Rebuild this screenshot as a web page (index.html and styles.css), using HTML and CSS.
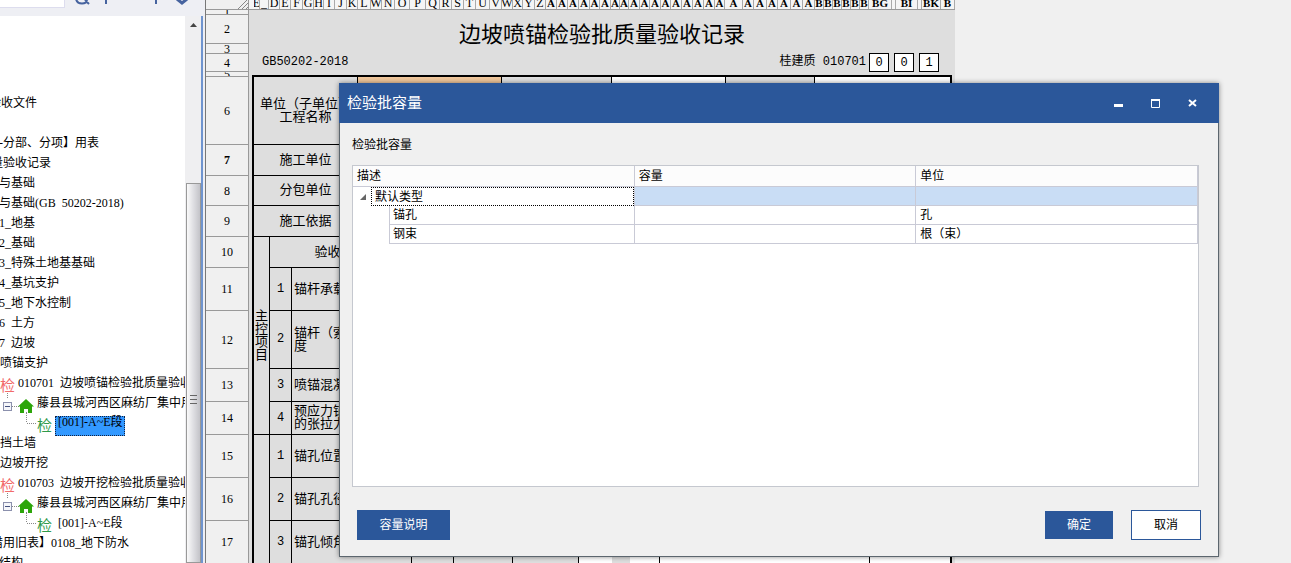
FILE: index.html
```html
<!DOCTYPE html>
<html lang="zh-CN">
<head>
<meta charset="utf-8">
<title>检验批容量</title>
<link rel="stylesheet" href="styles.css">
</head>
<body>
<div class="app">
  <aside class="sidebar">
    <div class="toolbar">
      <input class="search" type="text" aria-label="搜索">
      <svg class="tools" width="125" height="8" viewBox="0 0 125 8" fill="none" stroke="#46639f" stroke-width="2">
        <path d="M11 -1q1 4.500 6 4.500t5-4.500M20 0l4 4"/><path d="M41 0v4"/><path d="M91 0v4"/><path d="M112 -1l5 4 5-4" stroke-width="3"/>
      </svg>
    </div>
    <div class="side-body">
      <ul class="tree">
        <li class="row in-a">验收文件</li>
        <li class="row"></li>
        <li class="row in-c">-分部、分项】用表</li>
        <li class="row in-b">量验收记录</li>
        <li class="row in-c">与基础</li>
        <li class="row in-c">与基础(GB&nbsp; 50202-2018)</li>
        <li class="row in-c">1_地基</li>
        <li class="row in-c">2_基础</li>
        <li class="row in-c">3_特殊土地基基础</li>
        <li class="row in-c">4_基坑支护</li>
        <li class="row in-c">5_地下水控制</li>
        <li class="row in-c">6&nbsp; 土方</li>
        <li class="row in-c">7&nbsp; 边坡</li>
        <li class="row in-d">喷锚支护</li>
        <li class="row in-d"><span class="mark red">检</span>010701&nbsp; 边坡喷锚检验批质量验收记录</li>
        <li class="row in-d"><svg class="node" width="37" height="20" viewBox="0 0 37 20"><path d="M7.500 0v6M12 13.500h7M26.500 19v1" stroke="#888" stroke-dasharray="1 1" fill="none"/><rect x="3.500" y="9.500" width="8" height="8" fill="#f4f5fa" stroke="#8b90ad"/><path d="M5 13.500h5" stroke="#44507e"/><path d="M26 6l8 7.500h-2V20h-4v-4h-4v4h-4v-6.500h-2z" fill="#2ca50a"/></svg>藤县县城河西区麻纺厂集中用地</li>
        <li class="row in-d"><svg class="node" width="37" height="20" viewBox="0 0 37 20"><path d="M26.500 0v10M27 10.500h10" stroke="#888" stroke-dasharray="1 1" fill="none"/></svg><span class="mark green">检</span><span class="leaf selected">[001]-A~E段</span></li>
        <li class="row in-d">挡土墙</li>
        <li class="row in-d">边坡开挖</li>
        <li class="row in-d"><span class="mark red">检</span>010703&nbsp; 边坡开挖检验批质量验收记录</li>
        <li class="row in-d"><svg class="node" width="37" height="20" viewBox="0 0 37 20"><path d="M7.500 0v6M12 13.500h7M26.500 19v1" stroke="#888" stroke-dasharray="1 1" fill="none"/><rect x="3.500" y="9.500" width="8" height="8" fill="#f4f5fa" stroke="#8b90ad"/><path d="M5 13.500h5" stroke="#44507e"/><path d="M26 6l8 7.500h-2V20h-4v-4h-4v4h-4v-6.500h-2z" fill="#2ca50a"/></svg>藤县县城河西区麻纺厂集中用地</li>
        <li class="row in-d"><svg class="node" width="37" height="20" viewBox="0 0 37 20"><path d="M26.500 0v10M27 10.500h10" stroke="#888" stroke-dasharray="1 1" fill="none"/></svg><span class="mark green">检</span><span class="leaf">[001]-A~E段</span></li>
        <li class="row in-b">借用旧表】0108_地下防水</li>
        <li class="row in-c">结构</li>
      </ul>
      <div class="scrollbar">
        <svg width="7" height="4" viewBox="0 0 7 4"><path d="M0 4L3.500 0 7 4z" fill="#444"/></svg>
        <div class="thumb"><svg width="7" height="9" viewBox="0 0 7 9" stroke="#666"><path d="M0 .5h7M0 4.500h7M0 8.500h7"/></svg></div>
      </div>
    </div>
  </aside>
  <main class="sheet">
    <div class="corner"><svg width="10" height="9" viewBox="0 0 10 9" stroke="#888"><path d="M0 9L9 0M4 9l6-6M8 9l2-2"/></svg></div>
    <div class="cols">
      <span>E</span><span>_</span><span>D</span><span>E</span><span>F</span><span>G</span><span>H</span><span>I</span><span>J</span><span>K</span><span>L</span><span>W</span><span>N</span><span>O</span><span>P</span><span>Q</span><span>R</span><span>S</span><span>T</span><span>U</span><span>V</span><span>W</span><span>X</span><span>Y</span><span>Z</span>
      <b>A</b><b>A</b><b>A</b><b>A</b><b>A</b><b>A</b><b>A</b><b>A</b><b>A</b><b>A</b><b>A</b><b>A</b><b>A</b><b>A</b><b>A</b><b>A</b><b>A</b><b>A</b><b>A</b><b>A</b><b>A</b><b>A</b><b>A</b><b>A</b>
      <b>B</b><b>B</b><b>B</b><b>B</b><b>B</b><b>B</b><b>BG</b><b></b><b>BI</b><b></b><b>BK</b><b>B</b>
    </div>
    <div class="nums">
      <span>1</span><span>2</span><span>3</span><span>4</span><span>5</span><span>6</span><span class="current">7</span><span>8</span><span>9</span><span>10</span><span>11</span><span>12</span><span>13</span><span>14</span><span>15</span><span>16</span><span>17</span>
    </div>
    <div class="page">
      <h1 class="title">边坡喷锚检验批质量验收记录</h1>
      <div class="codes"><span>GB50202-2018</span><span class="serial"><span>桂建质 010701</span><span class="digits"><i>0</i><i>0</i><i>1</i></span></span></div>
      <div class="form">
        <div class="cell label r6">单位（子单位）<br>工程名称</div>
        <div class="cell peach r6 c-a"></div>
        <div class="cell r6 c-b"></div>
        <div class="cell white r6 c-c"></div>
        <div class="cell r6 c-d"></div>
        <div class="cell white r6 c-e"></div>
        <div class="cell label r7">施工单位</div>
        <div class="cell label r8">分包单位</div>
        <div class="cell label r9">施工依据</div>
        <div class="cell side main-items">主控项目</div>
        <div class="cell head r10">验收项目</div>
        <div class="cell no r11">1</div><div class="cell item r11">锚杆承载力</div>
        <div class="cell no r12">2</div><div class="cell item r12">锚杆（索）锚固长<br>度</div>
        <div class="cell no r13">3</div><div class="cell item r13">喷锚混凝土强度</div>
        <div class="cell no r14">4</div><div class="cell item r14">预应力锚杆（索）<br>的张拉力</div>
        <div class="cell side other-items"></div>
        <div class="cell no r15">1</div><div class="cell item r15">锚孔位置</div>
        <div class="cell no r16">2</div><div class="cell item r16">锚孔孔径</div>
        <div class="cell no r17">3</div><div class="cell item r17">锚孔倾角</div>
        <div class="tail r17">
          <span class="box"></span><span class="box"></span><span class="box"></span><span class="white"></span><span></span><span class="box white"></span><span class="box white"></span><span class="white"></span>
        </div>
      </div>
    </div>
  </main>
</div>
<section class="dialog" role="dialog" aria-labelledby="dlg-title">
  <header class="titlebar">
    <h2 id="dlg-title">检验批容量</h2>
    <button type="button" aria-label="最小化"><svg width="9" height="9"><path d="M0 5h9v3H0z" fill="#fff"/></svg></button>
    <button type="button" aria-label="最大化"><svg width="9" height="9" fill="none" stroke="#fff"><path d="M.5 1v7.500h8V1" /><path d="M0 1h9" stroke-width="2"/></svg></button>
    <button type="button" aria-label="关闭"><svg width="9" height="9" stroke="#fff" stroke-width="2"><path d="M1 1l7 6M8 1L1 7"/></svg></button>
  </header>
  <div class="content">
    <p class="caption" id="cap">检验批容量</p>
    <div class="list">
      <table aria-labelledby="cap">
        <thead><tr><th>描述</th><th>容量</th><th>单位</th></tr></thead>
        <tbody>
          <tr class="active"><td class="group"><div><svg width="18" height="19"><path d="M13 7v6H7z" fill="#666"/></svg><span>默认类型</span></div></td><td></td><td></td></tr>
          <tr><td class="child"><div>锚孔</div></td><td></td><td>孔</td></tr>
          <tr><td class="child"><div>钢束</div></td><td></td><td>根（束）</td></tr>
        </tbody>
      </table>
    </div>
    <footer class="actions">
      <button type="button" class="btn help">容量说明</button>
      <button type="button" class="btn ok">确定</button>
      <button type="button" class="btn cancel">取消</button>
    </footer>
  </div>
</section>
</body>
</html>
```
FILE: styles.css
```css
* { box-sizing: border-box; }
body {
  margin: 0;
  height: 100vh;
  overflow: hidden;
  position: relative;
  background: #f0f0f0;
  color: #000;
  font: 12px/20px "Liberation Serif", "Noto Sans CJK SC", sans-serif;
}
svg { display: block; flex: none; }
button { font: inherit; padding: 0; border: 0; }
.app { display: flex; height: 100%; }

/* Project tree */
.sidebar {
  flex: none;
  width: 206px;
  display: flex;
  flex-direction: column;
  background: #eeeff4;
  border-right: 1px solid #777;
}
.toolbar { flex: none; height: 16px; display: flex; align-items: flex-start; }
.search {
  width: 65px;
  height: 8px;
  padding: 0;
  border: 1px solid #dde;
  border-width: 0 1px 1px 0;
  background: #fff;
}
.side-body {
  flex: 1;
  min-height: 0;
  display: flex;
  margin-right: 2px;
  border-right: 2px solid #6f94cf;
}
.tree {
  flex: 1;
  min-width: 0;
  overflow: hidden;
  margin: 0;
  padding: 77px 0 0;
  list-style: none;
  background: #fff;
}
.row { display: flex; height: 20px; white-space: nowrap; }
.in-a { margin-left: -11px; }
.in-b { margin-left: -9px; }
.in-c { margin-left: -1px; }
.mark { flex: none; font-size: 15px; line-height: 26px; }
.red { width: 18px; color: #f26a6a; }
.green { width: 18px; color: #2f9a4a; }
.leaf { height: 20px; padding: 0 3px; line-height: 20px; }
.selected {
  margin-top: 3px;
  line-height: 13px;
  background: #3399ff;
  outline: 1px dotted #124;
  outline-offset: -1px;
}
.scrollbar {
  flex: none;
  width: 16px;
  display: flex;
  flex-direction: column;
  align-items: center;
  padding-top: 7px;
  background: #efeff1;
}
.thumb {
  flex: 1;
  width: 15px;
  margin-top: 156px;
  display: flex;
  justify-content: center;
  padding-top: 211px;
  border: 1px solid #999;
  background: linear-gradient(90deg, #fafafa, #dedee2 50%, #c3c3c8);
}

/* Spreadsheet */
.sheet {
  flex: none;
  width: 749px;
  display: grid;
  grid-template: 10px 1fr / 43px 1fr;
  background: #dedede;
  overflow: hidden;
}
.corner {
  display: flex;
  justify-content: flex-end;
  background: #f0f0f0;
  border: 1px solid #999;
  border-width: 0 1px 1px 0;
}
.cols {
  display: grid;
  grid-template-columns:
    6px 9px 11px 11px 12px 11px 10px 11px 12px 11px 13px 11px 13px 15px 16px 14px 12px 12px 12px 14px 12px 11px 10px 12px 11px
    repeat(4, 11px) 10px 11px 9px 9px 11px 10px 11px 10px repeat(4, 11px) 10px 18px 11px 13px 11px 13px 12px 12px
    repeat(6, 9px) 23px 4px 22px 4px 19px 1fr;
  padding-left: 5px;
  border-bottom: 1px solid #999;
  background: #f5f5f5;
}
.cols > * {
  height: 9px;
  overflow: hidden;
  display: flex;
  justify-content: center;
  border-right: 1px solid #aaa;
  line-height: 7px;
}
.cols > b { font-size: 11px; }
.nums, .form { display: grid; }
.nums {
  grid-template-rows: 5px 29px 10px 18px 5px 68px 31px 30px 31px 31px 43px 58px 33px 33px 43px 43px 43px;
  background: #f0f0f0;
  border-right: 1px solid #999;
}
.nums span {
  display: flex;
  align-items: center;
  justify-content: center;
  overflow: hidden;
  border-bottom: 1px solid #999;
}
.nums .current { font-weight: bold; }
.page {
  display: flex;
  flex-direction: column;
  padding: 4px 3px 0 3px;
  font: 13px/13px "Liberation Mono", "Noto Sans CJK SC", monospace;
}
.title {
  margin: 0;
  height: 39px;
  font-size: 22px;
  font-weight: normal;
  line-height: 46px;
  text-align: center;
}
.codes {
  display: flex;
  justify-content: space-between;
  align-items: center;
  height: 19px;
  padding: 0 13px 0 10px;
  font-size: 12px;
}
.serial { display: flex; gap: 3px; align-items: center; }
.digits { display: flex; gap: 5px; }
.serial i {
  width: 20px;
  height: 19px;
  border: 1px solid #000;
  background: #fff;
  font-style: normal;
  line-height: 18px;
  text-align: center;
}
.form {
  flex: 1;
  margin-top: 3px;
  grid-template-columns: 16px 22px 66px 54px 90px 110px 114px 89px 1fr;
  grid-template-rows: 68px 31px 30px 31px 31px 43px 58px 33px 33px 43px 43px 43px;
  border: 2px solid #000;
  border-bottom: 0;
}
.cell {
  display: flex;
  align-items: center;
  justify-content: center;
  text-align: center;
  border: 1px solid #000;
  border-width: 0 1px 1px 0;
}
.white { background: #fff; }
.peach { background: #f0c79c; }
.label { grid-column: 1 / 4; }
.head { grid-column: 2 / 5; }
.side { grid-column: 1; padding: 0 1px; }
.main-items { grid-row: 5 / 10; }
.other-items { grid-row: 10 / 13; }
.no { grid-column: 2; font-size: 12px; }
.item { grid-column: 3 / 5; justify-content: flex-start; text-align: left; padding-left: 2px; }
.r6 { grid-row: 1; }
.r7 { grid-row: 2; }
.r8 { grid-row: 3; }
.r9 { grid-row: 4; }
.r10 { grid-row: 5; }
.r11 { grid-row: 6; }
.r12 { grid-row: 7; }
.r13 { grid-row: 8; }
.r14 { grid-row: 9; }
.r15 { grid-row: 10; }
.r16 { grid-row: 11; }
.r17 { grid-row: 12; }
.c-a { grid-column: 4 / 6; }
.c-b { grid-column: 6; }
.c-c { grid-column: 7; }
.c-d { grid-column: 8; }
.c-e { grid-column: 9; border-right: 0; }
.tail {
  grid-column: 5 / 10;
  display: grid;
  grid-template-columns: 42px 59px 66px 33px 18px 30px 210px 1fr;
}
.box { border-right: 1px solid #000; }

/* Dialog window */
.dialog {
  position: absolute;
  top: 83px;
  right: 72px;
  bottom: 6px;
  left: 339px;
  display: flex;
  flex-direction: column;
  background: #f0f0f0;
  border: 1px solid #5c666e;
  border-width: 0 1px 1px;
  box-shadow: 0 0 5px rgba(0, 0, 0, .45);
  font-family: "Liberation Sans", "Noto Sans CJK SC", sans-serif;
}
.titlebar {
  flex: none;
  display: flex;
  align-items: center;
  gap: 8px;
  height: 40px;
  margin: 0 -1px;
  padding: 0 12px 0 8px;
  background: #2b579a;
  color: #fff;
}
.titlebar h2 { flex: 1; margin: 0; font-size: 15px; font-weight: normal; }
.titlebar button {
  width: 29px;
  height: 30px;
  display: grid;
  place-items: center;
  background: transparent;
}
.content {
  flex: 1;
  display: flex;
  flex-direction: column;
  padding: 12px 17px 16px 12px;
}
.caption { margin: 0 0 10px; }
.list {
  flex: 1;
  margin-right: 2px;
  border: 1px solid #c5c8cf;
  background: #fff;
}
.list table { width: 100%; table-layout: fixed; border-collapse: separate; border-spacing: 0; }
.list th, .list td {
  height: 19px;
  padding: 0 0 0 4px;
  border: 1px solid #c9cad6;
  border-width: 0 1px 1px 0;
  font-weight: normal;
  line-height: 18px;
  text-align: left;
}
.list th { height: 21px; line-height: 20px; background: #fcfcfc; }
.list td.group, .list td.child { padding: 0; border-bottom: 0; }
.active td { background: #c9ddf5; }
.group div { display: flex; height: 19px; background: #fff; line-height: 20px; }
.group span { flex: 1; padding-left: 4px; outline: 1px dotted #000; outline-offset: -1px; }
.list td.child { padding-left: 36px; }
.child div {
  height: 19px;
  padding-left: 3px;
  border: 1px solid #c9cad6;
  border-width: 0 0 1px 1px;
}
.actions { display: flex; align-items: center; gap: 18px; margin-top: 23px; padding-left: 5px; }
.btn { height: 30px; border: 1px solid #2b579a; background: #2b579a; color: #fff; }
.help { width: 93px; margin-right: auto; }
.ok { width: 68px; height: 28px; }
.cancel { width: 70px; background: #fff; color: #000; }
```
